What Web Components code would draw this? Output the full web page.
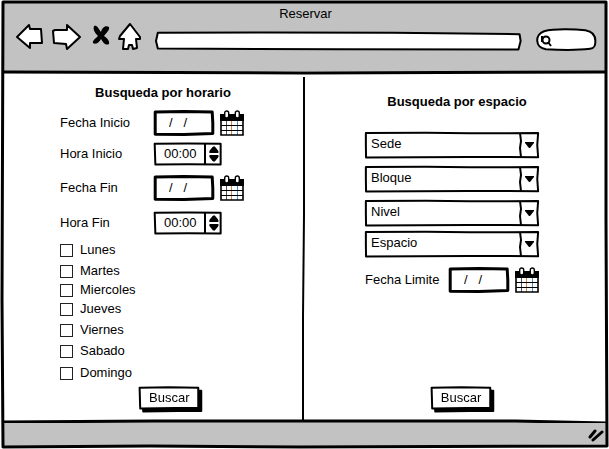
<!DOCTYPE html>
<html lang="es">
<head>
<meta charset="utf-8">
<title>Reservar</title>
<style>
html, body { margin: 0; background: #fff; }
body { font: 13px/18px "Liberation Sans", Arial, sans-serif; color: #000; }
</style>
</head>
<body>
<booking-window>
  <browser-bar slot="top" heading="Reservar"></browser-bar>
  <schedule-search></schedule-search>
  <space-search></space-search>
</booking-window>

<script>
const base = `
  *, *::before, *::after { box-sizing: border-box; }
  button, input, select { font: inherit; color: inherit; margin: 0; border-radius: 0; }
  button { cursor: pointer; }
  svg { display: block; }
  h1, h2 { margin: 0; font-size: inherit; line-height: inherit; }
`;

const define = (name, html, setup) => {
  const template = document.createElement('template');
  template.innerHTML = html(base);
  customElements.define(name, class extends HTMLElement {
    connectedCallback() {
      if (this.shadowRoot) return;
      const root = this.attachShadow({ mode: 'open' });
      root.append(template.content.cloneNode(true));
      if (setup) setup(this, root);
    }
  });
};

/* Box with a hand-drawn outline that stretches with its content. */
const outlines = {
  date: 'M2 4 L50 2 L97 4 L98 50 L98 94 L50 98 L2 97 L2 50 Z',
  time: 'M1 3 L50 2 L98 3 L98 98 L50 97 L2 98 Z',
  combo: 'M0.5 4 L35 3 L60 5 L99.5 4 L99 50 L99.5 97 L60 96 L0.6 98 L0.5 50 Z',
  button: 'M1 3 L50 1 L98 3 L98 96 L60 95 L2 98 Z',
  address: 'M0.5 4 L30 3 L65 4 L99.6 12 L99.9 50 L99.3 97 L50 96 L0.5 92 L0 50 Z',
  search: 'M12 10 C30 -2 65 1 82 6 C96 12 99 35 99 55 C99 78 97 88 90 90 C65 98 35 95 15 92 C-4 84 -4 25 12 10 Z'
};
define('sketch-box', css => `
  <style>${css}
    :host { display: block; position: relative; }
    .outline { position: absolute; inset: 0; width: 100%; height: 100%; overflow: visible; }
    path { fill: #fff; stroke: #000; stroke-linejoin: round; vector-effect: non-scaling-stroke; }
    .content { position: relative; display: flex; align-items: stretch; height: 100%; }
  </style>
  <svg class="outline" viewBox="0 0 100 100" preserveAspectRatio="none" aria-hidden="true"><path/></svg>
  <div class="content"><slot></slot></div>`,
  (host, root) => {
    const path = root.querySelector('path');
    path.setAttribute('d', outlines[host.getAttribute('shape')]);
    path.setAttribute('stroke-width', host.getAttribute('weight') || 2);
  });

define('browser-bar', css => `
  <style>${css}
    :host { display: block; background: #c2c2c2; padding: 3px 10px 20px 12px; }
    h1 { font-weight: 400; text-align: center; }
    nav { display: flex; align-items: center; }
    nav button { flex: none; border: 0; padding: 0; background: none; }
    .address { flex: 1; height: 18px; margin: 8px 16px 0 14px; }
    .find { flex: none; width: 59px; height: 22px; margin-top: 6px; }
    input { width: 100%; min-width: 0; border: 0; padding: 0 6px; background: none; outline: 0; }
    .find svg { flex: none; margin: 5px 0 0 4px; }
    .icon { fill: #fff; stroke: #000; stroke-width: 2; stroke-linejoin: round; }
    .forward, .stop, .home { margin-left: 8px; }
    .stop { padding-left: 3px; }
  </style>
  <h1></h1>
  <nav>
    <button aria-label="Atrás"><svg width="29" height="28" viewBox="0 0 29 28"><path class="icon" d="M2 14 L14 2 L15 6 L26 6 L27 20 L15 20 L15 25 Z"/></svg></button>
    <button class="forward" aria-label="Adelante"><svg width="29" height="28" viewBox="0 0 29 28"><path class="icon" d="M1 8 L3 7 L15 7 L15 2 L28 14 L15 26 L14 21 L2 20 Z"/></svg></button>
    <button class="stop" aria-label="Detener"><svg width="18" height="28" viewBox="0 0 18 28"><path d="M2 3 C5 2 6 5 9 9 C10 5 13 2 17 4 C18 7 14 10 12 13 C15 15 18 18 17 21 C13 23 11 19 9 16 C7 20 3 22 1 20 C0 18 4 15 6 13 C2 9 1 6 2 3 Z"/></svg></button>
    <button class="home" aria-label="Inicio"><svg width="24" height="28" viewBox="0 0 24 28"><path class="icon" d="M12 1 L22 14 L22 16 L18 16 L19 25 L15 26 L14 22 L11 22 L10 26 L5 26 L6 16 L1 16 L2 13 Z"/></svg></button>
    <sketch-box class="address" shape="address"><input type="text" aria-label="Dirección"></sketch-box>
    <sketch-box class="find" shape="search">
      <svg width="12" height="13" viewBox="0 0 12 13" fill="none" stroke="#000" stroke-width="2"><circle cx="5" cy="6" r="3.5"/><path d="M1 2 V8 M7 8 L10 12"/></svg>
      <input type="search" aria-label="Buscar en la web">
    </sketch-box>
  </nav>`,
  (host, root) => { root.querySelector('h1').textContent = host.getAttribute('heading'); });

define('date-field', css => `
  <style>${css}
    :host { display: flex; align-items: center; gap: 6px; }
    sketch-box { width: 60px; height: 24px; }
    input { width: 100%; min-width: 0; border: 0; padding: 0 0 0 15px; background: none; outline: 0; white-space: pre; }
    button { border: 0; padding: 0; background: none; }
  </style>
  <sketch-box shape="date" weight="3"><input type="text" value="/   /"></sketch-box>
  <button aria-label="Abrir calendario">
    <svg width="24" height="26" viewBox="0 0 24 26">
      <path d="M1 4 H23 V25 H1 Z" fill="#fff"/>
      <path d="M0 4 H24 V11 H0 Z"/>
      <path d="M6.5 11 V25" stroke="#555"/>
      <path d="M11.5 11 V25" stroke="#c98a4e"/>
      <path d="M17.5 11 V25" stroke="#4c8dbc"/>
      <path d="M1 15.5 H23 M1 20.5 H23" stroke="#000"/>
      <path d="M1 4 V25 H23 V4" fill="none" stroke="#000" stroke-width="1.6"/>
      <rect x="4.7" y="1" width="4" height="7" rx="2" fill="#fff" stroke="#000" stroke-width="1.4"/>
      <rect x="15.3" y="1" width="4" height="7" rx="2" fill="#fff" stroke="#000" stroke-width="1.4"/>
    </svg>
  </button>`,
  (host, root) => root.querySelector('input').setAttribute('aria-label', host.getAttribute('label')));

define('time-field', css => `
  <style>${css}
    :host { display: block; }
    sketch-box { width: 68px; height: 22px; }
    input { flex: 1; min-width: 0; border: 0; padding: 0 0 0 10px; background: none; outline: 0; }
    .steps { display: flex; flex-direction: column; justify-content: center; gap: 2px; width: 18px; border-left: 2px solid #000; padding-left: 3px; }
    button { border: 0; padding: 0; background: none; }
  </style>
  <sketch-box shape="time">
    <input type="text" value="00:00">
    <div class="steps">
      <button aria-label="Aumentar"><svg width="10" height="7" viewBox="0 0 10 7"><path d="M1 7 Q-1 6 2 3 Q5 -2 7 2 Q11 6 9 7 Z"/></svg></button>
      <button aria-label="Disminuir"><svg width="10" height="7" viewBox="0 0 10 7"><path d="M1 0 Q-1 1 2 4 Q5 9 7 5 Q11 1 9 0 Z"/></svg></button>
    </div>
  </sketch-box>`,
  (host, root) => root.querySelector('input').setAttribute('aria-label', host.getAttribute('label')));

define('combo-box', css => `
  <style>${css}
    :host { display: block; }
    sketch-box { height: 26px; }
    select { width: 100%; border: 0; padding: 0 22px 3px 6px; background: none; appearance: none; outline: 0; }
    .arrow { position: absolute; right: 0; top: 0; pointer-events: none; }
  </style>
  <sketch-box shape="combo">
    <select><option></option></select>
    <svg class="arrow" width="20" height="26" viewBox="0 0 20 26" aria-hidden="true">
      <path d="M1 1 L2 9 L1 16 L2 25" fill="none" stroke="#000" stroke-width="2"/>
      <path d="M6 10 H15 L15 11 L11 16 H10 L6 11 Z"/>
    </svg>
  </sketch-box>`,
  (host, root) => {
    const name = host.getAttribute('name');
    root.querySelector('select').setAttribute('aria-label', name);
    root.querySelector('option').textContent = name;
  });

define('day-check', css => `
  <style>${css}
    :host { display: flex; align-items: center; }
    label { display: flex; align-items: center; gap: 7px; }
    input { appearance: none; width: 13px; height: 13px; border: 1px solid #222; background: #fff; }
    input:checked { background: #000; box-shadow: inset 0 0 0 2px #fff; }
  </style>
  <label><input type="checkbox"><slot></slot></label>`);

define('action-button', css => `
  <style>${css}
    :host { display: block; }
    sketch-box { height: 22px; filter: drop-shadow(3px 3px 0 #000); }
    button { border: 0; background: none; padding: 0 10px; }
  </style>
  <sketch-box shape="button"><button type="button"><slot></slot></button></sketch-box>`);

define('schedule-search', css => `
  <style>${css}
    :host { display: flex; flex-direction: column; padding: 10px 37px 11px 57px; }
    h2 { text-align: center; }
    .fields { display: grid; grid-template-columns: 94px 1fr; grid-template-rows: 32px 30px 38px 32px; align-items: center; margin-top: 5px; }
    .days { display: grid; grid-template-rows: 22px 20px 18px 20px 22px 20px 24px; }
    .actions { display: flex; margin-top: auto; padding-left: 79px; }
  </style>
  <h2>Busqueda por horario</h2>
  <div class="fields">
    <span>Fecha Inicio</span><date-field label="Fecha Inicio"></date-field>
    <span>Hora Inicio</span><time-field label="Hora Inicio"></time-field>
    <span>Fecha Fin</span><date-field label="Fecha Fin"></date-field>
    <span>Hora Fin</span><time-field label="Hora Fin"></time-field>
  </div>
  <div class="days">
    <day-check>Lunes</day-check>
    <day-check>Martes</day-check>
    <day-check>Miercoles</day-check>
    <day-check>Jueves</day-check>
    <day-check>Viernes</day-check>
    <day-check>Sabado</day-check>
    <day-check>Domingo</day-check>
  </div>
  <div class="actions"><action-button>Buscar</action-button></div>`);

define('space-search', css => `
  <style>${css}
    :host { display: flex; flex-direction: column; padding: 19px 67px 11px 59px; }
    h2 { text-align: center; padding-left: 10px; }
    .combos { display: grid; grid-template-rows: 34px 34px 34px 28px; align-items: center; margin-top: 17px; }
    .limit { display: flex; align-items: center; justify-content: space-between; height: 44px; }
    .actions { display: flex; justify-content: center; margin-top: auto; padding-left: 18px; }
  </style>
  <h2>Busqueda por espacio</h2>
  <div class="combos">
    <combo-box name="Sede"></combo-box>
    <combo-box name="Bloque"></combo-box>
    <combo-box name="Nivel"></combo-box>
    <combo-box name="Espacio"></combo-box>
  </div>
  <div class="limit"><span>Fecha Limite</span><date-field label="Fecha Limite"></date-field></div>
  <div class="actions"><action-button>Buscar</action-button></div>`);

define('booking-window', css => `
  <style>${css}
    :host { display: flex; flex-direction: column; position: relative; min-height: 100vh; padding: 2px 3px 3px; box-sizing: border-box; }
    .rule { display: block; flex: none; width: 100%; height: 3px; overflow: visible; }
    main { flex: 1; display: grid; grid-template-columns: 1fr 3px 1fr; }
    .divider { width: 3px; height: calc(100% - 3px); margin-top: 3px; overflow: visible; }
    footer { display: flex; justify-content: flex-end; align-items: center; height: 23px; padding-right: 1px; background: #c2c2c2; }
    .frame { position: absolute; inset: 0; width: 100%; height: 100%; pointer-events: none; }
    .line { fill: none; stroke: #000; stroke-width: 3; stroke-linejoin: round; vector-effect: non-scaling-stroke; }
  </style>
  <slot name="top"></slot>
  <svg class="rule" viewBox="0 0 100 3" preserveAspectRatio="none" aria-hidden="true"><path class="line" d="M0 1 L50 2 L100 1"/></svg>
  <main>
    <slot></slot>
  </main>
  <svg class="rule" viewBox="0 0 100 3" preserveAspectRatio="none" aria-hidden="true"><path d="M0 1 H100 V3 H0 Z" fill="#c2c2c2"/><path d="M80 1 L100 3 V0 H80 Z" fill="#fff"/><path class="line" d="M0 2 L25 1 L50 1 L85 1 L100 3"/></svg>
  <footer><svg width="18" height="14" viewBox="0 0 18 14" fill="none" stroke="#000" stroke-width="3" stroke-linecap="round" aria-hidden="true"><path d="M3 9 L8 3 M6 12 L15 4"/></svg></footer>
  <svg class="frame" viewBox="0 0 609 449" preserveAspectRatio="none" aria-hidden="true"><path class="line" d="M3 2 L300 2 L606 2 L606 220 L607 446 L300 447 L150 446 L3 447 L2 300 Z"/></svg>`,
  (host, root) => {
    const divider = document.createElementNS('http://www.w3.org/2000/svg', 'svg');
    divider.setAttribute('class', 'divider');
    divider.setAttribute('viewBox', '0 0 3 100');
    divider.setAttribute('preserveAspectRatio', 'none');
    divider.setAttribute('aria-hidden', 'true');
    divider.innerHTML = '<path class="line" style="stroke-width:2" d="M1 0 L1 40 L0 70 L0 100"/>';
    root.querySelector('main').append(divider);
    divider.style.gridArea = '1 / 2';
    host.querySelector('schedule-search').style.gridArea = '1 / 1';
    host.querySelector('space-search').style.gridArea = '1 / 3';
  });
</script>
</body>
</html>
